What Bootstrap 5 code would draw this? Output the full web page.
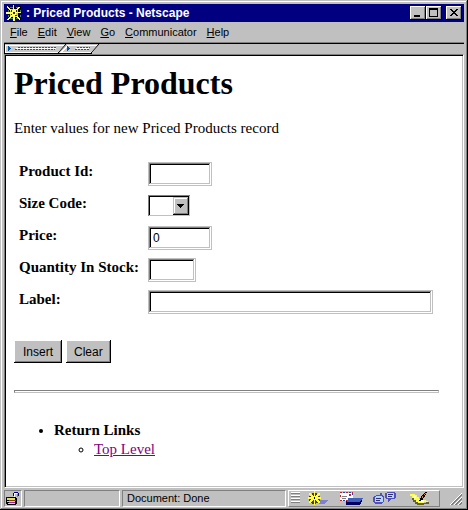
<!DOCTYPE html>
<html lang="en">
<head>
<meta charset="utf-8">
<meta name="viewport" content="width=device-width, initial-scale=1">
<title>Priced Products - Netscape</title>
<link href="https://cdn.jsdelivr.net/npm/bootstrap@5.3.0/dist/css/bootstrap.min.css" rel="stylesheet">
<style>
  :root { --face: #c0c0c0; --shade: #808080; }
  body { background: var(--face); color: #000; font-family: "Liberation Serif", serif; font-size: 15px; line-height: 19px; }
  svg { display: block; flex: none; shape-rendering: crispEdges; }
  .ui-font { font-family: "Liberation Sans", sans-serif; font-size: 11px; line-height: 14px; }
  .app-window { padding: 4px 4px 3px; background: var(--face);
    box-shadow: inset -1px -1px #000, inset 1px 1px var(--face), inset -2px -2px var(--shade), inset 2px 2px #fff; }
  .title-bar { height: 18px; padding: 0 2px; background: #000080; color: #fff; }
  .title-text { font-size: 12px; }
  .win-btn, .push-btn { border: 0; border-radius: 0; background: var(--face); color: #000; }
  .win-btn { width: 16px; height: 14px; padding: 0; box-shadow: inset -1px -1px #000, inset 1px 1px #fff, inset -2px -2px var(--shade); }
  .menu-bar { height: 20px; padding: 0 6px; gap: 10px; }
  .menu-btn { border: 0; padding: 0; background: none; color: #000; }
  .tool-strip { height: 12px; border-top: 1px solid var(--shade); box-shadow: inset 0 1px #000; }
  .page-view { background: #fff; border: 1px solid; border-color: var(--shade) #fff #fff var(--shade);
    box-shadow: inset 1px 1px #000, inset -1px -1px var(--face); padding: 10px 24px 24px 9px; }
  .page-title { font-size: 32px; line-height: 37px; margin-bottom: 17px; }
  .intro { margin-bottom: 24px; }
  .fields { grid-template-columns: minmax(122px, auto) 1fr; column-gap: 7px; row-gap: 8px; padding-left: 5px; margin-bottom: 26px; }
  .field-row { min-height: 24px; }
  .text-field { height: 24px; border: 1px solid var(--face); border-radius: 0; padding: 2px 4px; background: #fff; font-size: 12px;
    box-shadow: inset -1px -1px #fff, inset 1px 1px var(--shade), inset -2px -2px var(--face), inset 2px 2px #000; }
  .w-id { width: 64px; } .w-qty { width: 48px; } .w-label { width: 100%; max-width: 285px; }
  .drop { width: 42px; height: 21px; margin-top: 1px; }
  .drop select { appearance: none; border: 0; border-radius: 0; background: #fff;
    box-shadow: inset 1px 1px var(--shade), inset -1px -1px var(--face), inset 2px 2px #000; }
  .drop svg { right: 1px; top: 2px; pointer-events: none; }
  .push-btn { height: 23px; padding: 0 8px; font-size: 12px; box-shadow: inset -1px -1px #000, inset 1px 1px #fff, inset -2px -2px var(--shade); }
  .push-main { padding: 0 9px; }
  .rule { height: 3px; margin: 27px 0 28px; opacity: 1; border: 1px solid; border-color: var(--shade) var(--face) var(--face) var(--shade); background: #fff; }
  .links { padding-left: 40px; }
  .links ul { padding-left: 40px; list-style: circle; }
  .links a { color: #800080; }
  .status-bar { gap: 2px; padding-top: 2px; }
  .sunk { height: 17px; border: 1px solid; border-color: var(--shade) #fff #fff var(--shade); }
  .raised { height: 17px; border: 1px solid; border-color: #fff var(--shade) var(--shade) #fff; padding: 0 8px 0 2px; }
  .lock-cell { width: 18px; }
  .progress-cell { flex: 0 1 96px; }
  .comp-group { gap: 8px; padding-left: 6px; }
  .comp-btn { border: 0; padding: 0; background: none; }
  .grip { margin-left: 6px; }
</style>
<script src="https://cdn.jsdelivr.net/npm/bootstrap@5.3.0/dist/js/bootstrap.bundle.min.js"></script>
</head>
<body>
<div class="app-window d-flex flex-column min-vh-100">
  <header class="ui-font">
    <div class="title-bar d-flex align-items-center">
      <svg width="16" height="16" viewBox="0 0 16 16" aria-hidden="true">
        <path fill="#000" d="M1 1h3v1h3V0h2v2h3V1h3v3h-1v3h2v2h-2v3h1v3h-3v-1H9v2H7v-2H4v1H1v-3h1V9H0V7h2V4H1z"/>
        <path fill="#408080" d="M4 2h3v1H4zm6 0h3v1h-3zM2 5h1v2H2zm12 0h1v2h-1zM2 10h1v2H2zm12 0h1v2h-1zM4 13h3v1H4zm6 0h3v1h-3z"/>
        <path fill="#e0d030" d="M5 4h6v1h1v6h-1v1H5v-1H4V5h1z"/>
        <path fill="#ff6" d="M7 0h1v4h1v1h1V4h1V3h1V2h2v1h-1v1h-1v1h-1v1h-1v1h5v1h-5v2h1v1h1v1h1v1h1v2h-1v-1h-1v-1h-1v-1h-1v-1H9v5H7v-5H6v1H5v1H4v1H3v1H1v-1h1v-1h1v-1h1v-1h1V9H0V7h5V6H4V5H3V4H2V3H1V1h1v1h1v1h1v1h1v1h2z"/>
        <path fill="#403000" d="M5 5h1v2H5zm5 0h1v2h-1zM5 9h1v1H5zm4 1h2v1H9zM7 7h2v2H7z"/>
      </svg>
      <span class="title-text fw-bold flex-grow-1 text-truncate ms-1">: Priced Products - Netscape</span>
      <div class="d-flex">
        <button class="win-btn" type="button" aria-label="Minimize"><svg width="16" height="14" viewBox="0 0 16 14"><path d="M4 9h6v2H4z"/></svg></button>
        <button class="win-btn" type="button" aria-label="Maximize"><svg width="16" height="14" viewBox="0 0 16 14"><path fill-rule="evenodd" d="M3 2h9v9H3zm1 2v6h7V4z"/></svg></button>
        <button class="win-btn ms-1" type="button" aria-label="Close"><svg width="16" height="14" viewBox="0 0 16 14"><path d="M4 3h2v1h1v1h2V4h1V3h2v1h-1v1h-1v1H9v1h1v1h1v1h1v1h-2V9H9V8H7v1H6v1H4V9h1V8h1V7h1V6H6V5H5V4H4z"/></svg></button>
      </div>
    </div>
    <nav class="menu-bar d-flex align-items-center" aria-label="Main menu">
      <button class="menu-btn" type="button"><u>F</u>ile</button>
      <button class="menu-btn" type="button"><u>E</u>dit</button>
      <button class="menu-btn" type="button"><u>V</u>iew</button>
      <button class="menu-btn" type="button"><u>G</u>o</button>
      <button class="menu-btn" type="button"><u>C</u>ommunicator</button>
      <button class="menu-btn" type="button"><u>H</u>elp</button>
    </nav>
    <div class="tool-strip">
      <svg width="96" height="11" viewBox="0 0 96 11" aria-hidden="true">
        <path fill="#fff" d="M1 2h60l-7 8H1zm62 0h31l-7 8H56z"/>
        <path fill="#c8c8c8" d="M2 3h57l-6 6H2zm62 0h28l-6 6H59z"/>
        <path fill="none" stroke="#000" d="M54 10l8-9M87 10l8-9" shape-rendering="auto"/>
        <path fill="#000" d="M0 1h1v9H0zm0 9h88v1H0z"/>
        <path fill="#0050a0" d="M4 3h1v1h1v1h1v1H6v1H5v1H4zm59 0h1v1h1v1h1v1h-1v1h-1v1h-1z"/>
        <path fill="none" stroke="#fff" d="M12 5.500h40M72 5.500h13"/>
        <path fill="none" stroke="#1858a8" stroke-dasharray="2 1" d="M14 4.500h38M11 6.500h40M73 4.500h13M71 6.500h14"/>
      </svg>
    </div>
  </header>

  <main class="page-view flex-grow-1">
    <h1 class="page-title fw-bold">Priced Products</h1>
    <p class="intro">Enter values for new Priced Products record</p>
    <form>
      <div class="fields d-grid">
        <label class="fw-bold" for="pid">Product Id:</label>
        <div class="field-row"><input class="text-field w-id ui-font d-block" id="pid" type="text"></div>
        <label class="fw-bold" for="size">Size Code:</label>
        <div class="field-row"><div class="drop position-relative">
          <select class="w-100 h-100 d-block" id="size"><option></option></select>
          <svg class="position-absolute" width="16" height="18" viewBox="0 0 16 18" aria-hidden="true">
            <path fill="#c0c0c0" d="M0 0h16v18H0z"/><path fill="#fff" d="M1 1h14v1H2v14H1z"/>
            <path fill="#808080" d="M14 1h1v16H1v-1h13z"/><path d="M15 0h1v18H0v-1h15zM4 7h7v1h-1v1H9v1H8v1H7v-1H6V9H5V8H4z"/>
          </svg>
        </div></div>
        <label class="fw-bold" for="price">Price:</label>
        <div class="field-row"><input class="text-field w-id ui-font d-block" id="price" type="text" value="0"></div>
        <label class="fw-bold" for="qty">Quantity In Stock:</label>
        <div class="field-row"><input class="text-field w-qty ui-font d-block" id="qty" type="text"></div>
        <label class="fw-bold" for="lbl">Label:</label>
        <div class="field-row"><input class="text-field w-label ui-font d-block" id="lbl" type="text"></div>
      </div>
      <div class="d-flex gap-1">
        <button class="push-btn push-main ui-font" type="button">Insert</button>
        <button class="push-btn ui-font" type="reset">Clear</button>
      </div>
    </form>
    <hr class="rule">
    <ul class="links mb-0">
      <li><strong>Return Links</strong>
        <ul><li><a href="#">Top Level</a></li></ul>
      </li>
    </ul>
  </main>

  <footer class="status-bar ui-font d-flex align-items-start">
    <div class="sunk lock-cell flex-shrink-0">
      <svg width="16" height="15" viewBox="0 0 16 15" role="img" aria-label="Security">
        <path fill="#000080" d="M9 1h4v1h1v3h-1V2H9v3H8V2h1z"/><path fill="#fff" d="M9 2h3v1h-2v3H9z"/><path fill="#808080" d="M12 3h1v3h-1z"/>
        <path fill="#000" d="M2 6h9v1h1v6h-1v1H2v-1H1V7h1z"/>
        <path fill="#e0e060" d="M2 7h8v2H2zm0 3h8v1H2zm1 2h7v1H3z"/><path fill="#804000" d="M4 9h7v1H4z"/><path fill="#a020a0" d="M4 11h6v1H4z"/>
        <path fill="#0000a0" d="M1 6h2v1H1zM1 12h1v1H1z"/>
      </svg>
    </div>
    <div class="sunk progress-cell"></div>
    <div class="sunk flex-grow-1 px-1 text-truncate">Document: Done</div>
    <div class="raised d-flex align-items-center flex-shrink-0">
      <svg width="10" height="15" viewBox="0 0 10 15" aria-hidden="true"><path fill="#fff" d="M0 1h9v1H0zm0 3h9v1H0zm0 3h9v1H0zm0 3h9v1H0z"/><path fill="#808080" d="M0 2h9v1H0zm0 3h9v1H0zm0 3h9v1H0zm0 3h9v1H0z"/></svg>
      <div class="comp-group d-flex">
        <button class="comp-btn" type="button" aria-label="Navigator">
          <svg width="24" height="15" viewBox="0 0 24 15"><path fill="#8080d0" d="M13 9h8v1h-1v1h-1v1h-1v1h-6v-2h1z"/>
            <path fill="#504000" d="M5 2h5v1h2v2h1v5h-2v2H9v1H5v-1H3v-2H2V5h1V3h2z"/>
            <path fill="#c8c8a0" d="M5 4h1v2H5zm4 0h1v2H9zM4 5h1v1H4zm6 0h1v1h-1zM4 9h2v1H4zm5 0h2v1H9z"/>
            <path fill="#ffff40" d="M7 0h1v5h1V4h1V3h1V2h2v2h-1v1h-1v1h3v2h-3v1h1v1h1v2h-2v-1h-1v-1H9V9H8v5H7V9H6v1H5v1H4v1H2v-2h1V9h1V8H1V6h3V5H3V4H2V2h2v1h1v1h1v1h1z"/>
            <path fill="#000" d="M7 6h1v2H7z"/></svg>
        </button>
        <button class="comp-btn" type="button" aria-label="Mailbox">
          <svg width="25" height="15" viewBox="0 0 25 15"><path fill="#000060" d="M8 8h15v3h-1v2h-1v1H7v-4h1z"/><path fill="#4060c0" d="M9 7h15v1h-1v1h-1v1h-1v1H8V9h1z"/>
            <path fill="#fff" d="M1 2h13v5H9v2H7v1H1z"/><path fill="none" stroke="#d02020" stroke-dasharray="2 4" d="M1 1.500h13M1 9.500h7M1.500 4v6"/><path fill="none" stroke="#2040c0" stroke-dasharray="2 4" d="M4 1.500h10M4 9.500h4M13.500 2v5"/>
            <path fill="#808080" d="M3 5h5v1H3zm0 2h4v1H3z"/><path fill="#d02020" d="M10 3h2v2h-2z"/></svg>
        </button>
        <button class="comp-btn" type="button" aria-label="Discussions">
          <svg width="25" height="15" viewBox="0 0 25 15"><path fill="#5050c0" d="M4 4h4V2h2v2h1v1h1v6h-1v1h-1v1H3v-1H2v-1H1V6h1V5h2zm11-3h8v1h1v5h-1v1h-4v1h-1v1h-1v1h-1V8h-2V7h-1V2h1z"/>
            <path fill="#b0d8ff" d="M4 5h6v1h1v5H3V6h1zm11-3h7v5h-7z"/><path fill="#303070" d="M4 7h5v1H4zm0 2h4v1H4zm12-6h5v1h-5zm0 2h4v1h-4z"/></svg>
        </button>
        <button class="comp-btn ms-1" type="button" aria-label="Composer">
          <svg width="22" height="15" viewBox="0 0 22 15"><path fill="#606030" d="M3 7h2v2h2v2h2v1h8v-1h3v2h-5v1H8v-1H6v-2H4V9H3z"/>
            <path fill="#ffff50" d="M1 3h5v1h2v2h2v2h4v1h3v1h2v1h-4v1H9v-1H7V9H5V7H3V5H1z"/><path fill="#fff" d="M4 4h2v1h1v2H5V6H4zm8 5h3v2h-3z"/>
            <path fill="#000" d="M16 1h2v1h-1v2h-1v2h-1v1h-1v2h-2v1h-2V9h1V7h1V5h1V4h1V3h1V2h1z"/><path fill="#d09020" d="M16 2h1v1h-1v1h-1V3h1zM13 5h1v2h-1z"/></svg>
        </button>
      </div>
    </div>
    <svg class="grip align-self-end" width="16" height="16" viewBox="0 0 16 16" aria-hidden="true">
      <g fill="none" shape-rendering="auto"><path stroke="#fff" d="M2 14L14 2M6 14l8-8M10 14l4-4"/><path stroke="#808080" d="M3 14L14 3M4 14L14 4M7 14l7-7M8 14l6-6M11 14l3-3M12 14l2-2"/></g>
    </svg>
  </footer>
</div>
</body>
</html>
